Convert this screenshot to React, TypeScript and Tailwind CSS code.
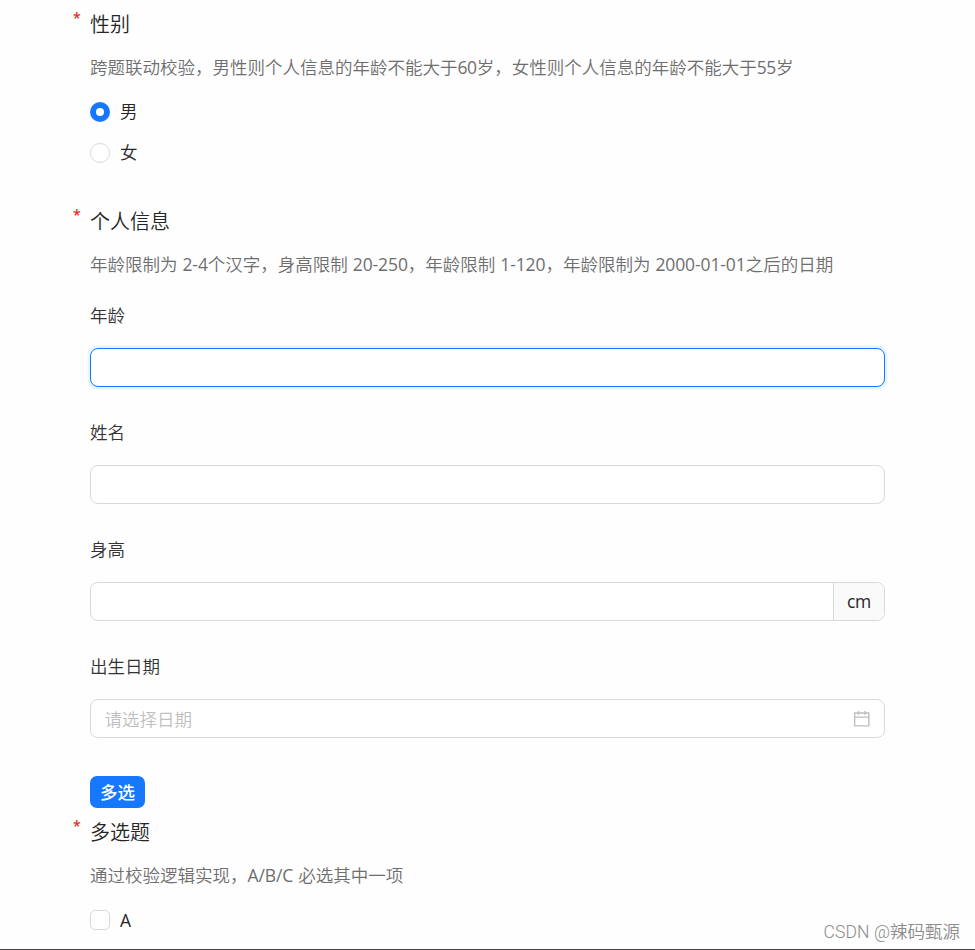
import React from "react";

// Splits mixed text so that Latin runs can take their own weight and tracking.
function Mixed({ text }: { text: string }) {
  return (
    <>
      {text.split(/([\x21-\x7e]+)/).map((part, i) =>
        i % 2 ? (
          <span
            key={i}
            className={/^(\d+|[a-z]+)$/.test(part) ? "font-normal tracking-[-0.4px]" : "font-normal tracking-[-0.1px]"}
          >
            {part}
          </span>
        ) : (
          <React.Fragment key={i}>{part}</React.Fragment>
        )
      )}
    </>
  );
}

function Title({ text }: { text: string }) {
  return (
    <h3 className="relative flex h-12 items-center pt-[2px] text-[20px] text-[#262626]">
      <span className="absolute top-[11px] -left-[17px] text-[14px] leading-none font-semibold text-[#e03028]">*</span>
      {text}
    </h3>
  );
}

function Description({ text }: { text: string }) {
  return (
    <p className="flex h-10 items-center whitespace-pre text-[#6e6e6e] [word-spacing:0.4px]">
      <span><Mixed text={text} /></span>
    </p>
  );
}

function Radio({ label, checked = false }: { label: string; checked?: boolean }) {
  return (
    <label className="flex h-[41px] items-center gap-[10px] text-[#262626]">
      <span
        className={
          checked
            ? "flex size-5 items-center justify-center rounded-full bg-[#1677ff]"
            : "size-5 rounded-full border border-[#d9d9d9] bg-white"
        }
      >
        {checked && <span className="size-2 rounded-full bg-white" />}
      </span>
      <span>{label}</span>
    </label>
  );
}

function Field({ label, children }: { label: string; children: React.ReactNode }) {
  return (
    <div className="h-[117px]">
      <div className="flex h-10 items-center text-[#333]">{label}</div>
      <div className="mt-3">{children}</div>
    </div>
  );
}

const box = "flex h-[39px] w-full items-center rounded-[8px] border bg-white";

function CalendarIcon() {
  return (
    <svg width="17.5" height="17.5" viewBox="64 64 896 896" fill="#bfbfbf">
      <path d="M880 184H712v-64c0-4.400-3.600-8-8-8h-56c-4.400 0-8 3.600-8 8v64H384v-64c0-4.400-3.600-8-8-8h-56c-4.400 0-8 3.600-8 8v64H144c-17.700 0-32 14.300-32 32v664c0 17.700 14.300 32 32 32h736c17.700 0 32-14.300 32-32V216c0-17.700-14.300-32-32-32zm-40 656H184V460h656v380zM184 392V256h128v48c0 4.400 3.600 8 8 8h56c4.400 0 8-3.600 8-8v-48h256v48c0 4.400 3.600 8 8 8h56c4.400 0 8-3.600 8-8v-48h128v136H184z" />
    </svg>
  );
}

export default function App() {
  return (
    <div className="relative h-[950px] w-[975px] overflow-hidden border-b border-[#4b4448] bg-[#fefefe] pl-[90px] font-['Open_Sans','Noto_Sans_CJK_SC',sans-serif] text-[17.5px] leading-none font-[350]">
      <main className="w-[795px]">
        <section>
          <Title text="性别" />
          <Description text="跨题联动校验，男性则个人信息的年龄不能大于60岁，女性则个人信息的年龄不能大于55岁" />
          <div className="mt-[3px]">
            <Radio label="男" checked />
            <Radio label="女" />
          </div>
        </section>

        <section className="mt-6">
          <Title text="个人信息" />
          <Description text="年龄限制为 2-4个汉字，身高限制 20-250，年龄限制 1-120，年龄限制为 2000-01-01之后的日期" />
          <div className="mt-[11px]">
            <Field label="年龄">
              <div className={`${box} border-[#1677ff] shadow-[0_0_0_2.5px_#e6f4ff]`} />
            </Field>
            <Field label="姓名">
              <div className={`${box} border-[#d9d9d9]`} />
            </Field>
            <Field label="身高">
              <div className={`${box} justify-end overflow-hidden border-[#d9d9d9]`}>
                <span className="flex h-full w-[51px] items-center justify-center border-l border-[#d9d9d9] bg-[#fafafa] text-[#262626]">
                  <Mixed text="cm" />
                </span>
              </div>
            </Field>
            <Field label="出生日期">
              <div className={`${box} justify-between border-[#d9d9d9] pr-[14px] pl-[13.5px] text-[#bfbfbf]`}>
                <span className="pt-[2px]">请选择日期</span>
                <CalendarIcon />
              </div>
            </Field>
          </div>
        </section>

        <section className="mt-3">
          <span className="flex h-8 w-[55px] items-center justify-center rounded-[7px] bg-[#1677ff] pt-[2px] font-medium text-white">
            多选
          </span>
          <Title text="多选题" />
          <Description text="通过校验逻辑实现，A/B/C 必选其中一项" />
          <label className="mt-[3px] flex h-[41px] items-center gap-[10px] text-[#262626]">
            <span className="size-5 rounded-[5px] border border-[#d9d9d9] bg-white" />
            <span className="pt-[2px] font-normal">A</span>
          </label>
        </section>
      </main>
      <div className="absolute top-[924px] right-[15px] font-[Roboto,'Noto_Sans_CJK_SC',sans-serif] text-[17.5px] whitespace-nowrap text-[#8c8c8c]">
        <span className="tracking-[0.1px]">CSDN @</span>辣码甄源
      </div>
    </div>
  );
}
